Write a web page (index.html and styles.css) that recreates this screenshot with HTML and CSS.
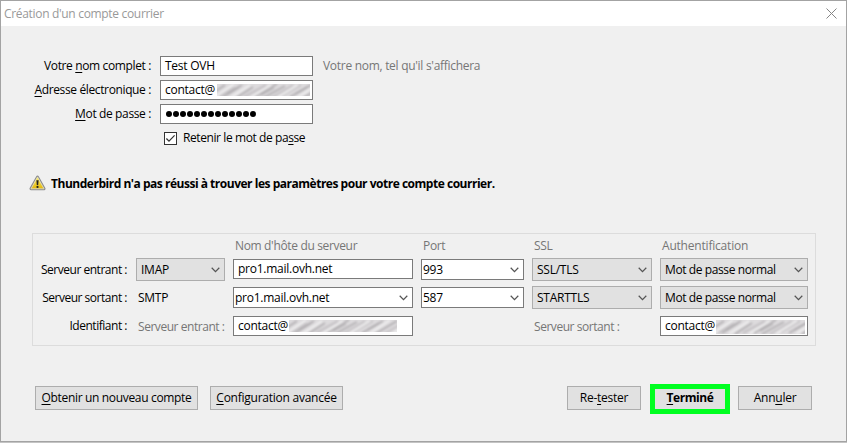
FILE: index.html
```html
<!DOCTYPE html>
<html lang="fr">
<head>
<meta charset="utf-8">
<title>Création d'un compte courrier</title>
<link rel="stylesheet" href="styles.css">
</head>
<body>
<svg class="defs" width="0" height="0">
  <defs>
    <filter id="soft"><feGaussianBlur stdDeviation="0.8"/></filter>
    <pattern id="scribble" width="110" height="14" patternUnits="userSpaceOnUse">
      <rect width="110" height="14" fill="#dddbdd"/>
      <g fill="none" filter="url(#soft)">
        <path d="M-4 9L8 1M6 13L25 1M19 14L36 3M38 13L60 0M46 14L68 2M73 13L94 1M86 14L108 1" stroke="#b0adb0" stroke-width="1.7"/>
        <path d="M2 13L18 3M27 13L49 1M54 14L76 1M65 12L84 1M95 14L112 4" stroke="#c4c1c4" stroke-width="2"/>
        <path d="M-2 13L17 0M13 14L33 1M33 14L54 1M60 14L81 1M80 14L101 0M103 14L114 7" stroke="#f8f8f8" stroke-width="1.4"/>
        <path d="M10 10L22 3M44 11L57 4M78 10L90 3" stroke="#a09da0" stroke-width="1"/>
      </g>
    </pattern>
    <symbol id="chevron" viewBox="0 0 9 6"><path d="M.7 .8L4.5 4.6L8.3 .8" fill="none" stroke="#555" stroke-width="1.25"/></symbol>
  </defs>
</svg>
<div class="dialog">
  <header class="titlebar">
    <span class="title">Création d'un compte courrier</span>
    <svg class="close" width="11" height="11" viewBox="0 0 11 11"><path d="M.5 .5L10.5 10.5M10.5 .5L.5 10.5" stroke="#858585" fill="none"/></svg>
  </header>

  <section class="identity">
    <label>Votre <u>n</u>om complet :</label>
    <div class="input">Test OVH</div>
    <span class="hint">Votre nom, tel qu'il s'affichera</span>
    <label><u>A</u>dresse électronique :</label>
    <div class="input">contact@<svg class="mask mail" width="93" height="12"><rect width="93" height="12" fill="url(#scribble)"/></svg></div>
    <label><u>M</u>ot de passe :</label>
    <div class="input dots"><i></i><i></i><i></i><i></i><i></i><i></i><i></i><i></i><i></i><i></i><i></i><i></i><i></i></div>
  </section>
  <div class="remember">
    <svg width="13" height="13" viewBox="0 0 13 13"><rect x=".5" y=".5" width="12" height="12" fill="#fff" stroke="#333"/><path d="M2.4 6.5L5 9.2L10.6 3.4" fill="none" stroke="#333" stroke-width="1.25"/></svg>
    <span>Retenir le mot de pa<u>s</u>se</span>
  </div>

  <div class="warning">
    <svg width="17" height="16" viewBox="0 0 17 16">
      <defs><linearGradient id="gold" x2="0" y2="1"><stop stop-color="#fff06a"/><stop offset="1" stop-color="#e2b60a"/></linearGradient></defs>
      <path d="M8.5 1.9L15.1 13.8H1.9Z" fill="#ddd" stroke="#8b8b8b" stroke-width="2.8" stroke-linejoin="round"/>
      <path d="M8.5 1.9L15 13.8H2Z" fill="url(#gold)" stroke="#e9e6c8" stroke-width=".8" stroke-linejoin="round"/>
      <path d="M7.4 5.2H9.6L9.2 10H7.8Z" fill="#222"/><circle cx="8.5" cy="11.9" r="1.1" fill="#222"/>
    </svg>
    <strong>Thunderbird n'a pas réussi à trouver les paramètres pour votre compte courrier.</strong>
  </div>

  <section class="servers">
    <span class="head host">Nom d'hôte du serveur</span>
    <span class="head">Port</span>
    <span class="head">SSL</span>
    <span class="head auth-head">Authentification</span>

    <label>Serveur entrant :</label>
    <div class="select">IMAP<svg><use href="#chevron"/></svg></div>
    <div class="input incoming">pro1.mail.ovh.net</div>
    <div class="combo">993<svg><use href="#chevron"/></svg></div>
    <div class="select">SSL/TLS<svg><use href="#chevron"/></svg></div>
    <div class="select method">Mot de passe normal<svg><use href="#chevron"/></svg></div>

    <label>Serveur sortant :</label>
    <span class="plain">SMTP</span>
    <div class="combo">pro1.mail.ovh.net<svg><use href="#chevron"/></svg></div>
    <div class="combo">587<svg><use href="#chevron"/></svg></div>
    <div class="select">STARTTLS<svg><use href="#chevron"/></svg></div>
    <div class="select method">Mot de passe normal<svg><use href="#chevron"/></svg></div>

    <label>Identifiant :</label>
    <span class="plain muted">Serveur entrant :</span>
    <div class="input">contact@<svg class="mask in" width="108" height="12"><rect width="108" height="12" fill="url(#scribble)"/></svg></div>
    <span class="plain muted out">Serveur sortant :</span>
    <div class="input">contact@<svg class="mask auth" width="89" height="14"><rect width="89" height="14" fill="url(#scribble)"/></svg></div>
  </section>

  <footer class="actions">
    <div class="button new"><span><u>O</u>btenir un nouveau compte</span></div>
    <div class="button advanced"><span><u>C</u>onfiguration avancée</span></div>
    <div class="button retest"><span>Re-<u>t</u>ester</span></div>
    <div class="button done"><span><u>T</u>erminé</span></div>
    <div class="button"><span>Ann<u>u</u>ler</span></div>
  </footer>
</div>
</body>
</html>
```

FILE: styles.css
```css
* { box-sizing: border-box; }
body {
  margin: 0;
  width: 847px;
  height: 443px;
  overflow: hidden;
  background: #c4c4c4;
  font: 12px/16px "Open Sans", "Noto Sans", sans-serif;
  letter-spacing: -0.25px;
  color: #000;
}
.defs { position: absolute; }
u { text-decoration-thickness: 1px; text-underline-offset: 2px; text-decoration-skip-ink: none; }
.dialog {
  width: 847px;
  height: 442px;
  border: 1px solid #a3a3a3;
  background: #f0f0f0;
}
.titlebar {
  height: 25px;
  padding: 0 9px 0 3px;
  display: flex;
  align-items: center;
  justify-content: space-between;
  background: #fff;
  color: #999;
  letter-spacing: -0.32px;
}
.identity {
  margin: 30px 0 0 0;
  display: grid;
  grid-template-columns: 150px 153px auto;
  grid-auto-rows: 20px;
  row-gap: 4px;
  column-gap: 9px;
  align-items: center;
}
.identity label { grid-column: 1; text-align: right; letter-spacing: -0.37px; }
.hint, .muted, .head { color: #767676; }
.hint { padding-left: 1px; letter-spacing: -0.29px; }
.input, .combo, .select {
  border: 1px solid #7a7a7a;
  background: #fff;
  display: flex;
  align-items: center;
  white-space: nowrap;
}
.input { height: 20px; padding-left: 4px; position: relative; }
.incoming { margin-top: -1px; }
.mask { position: absolute; top: 3px; }
.mask.mail { left: 56px; }
.mask.in { left: 55px; }
.mask.auth { left: 55px; }
.dots { padding-left: 5px; gap: 1px; }
.dots i { width: 6px; height: 6px; border-radius: 50%; background: #000; }
.remember {
  margin: 6px 0 0 163px;
  height: 16px;
  display: flex;
  align-items: center;
  gap: 6px;
  letter-spacing: -0.41px;
}
.warning {
  margin: 30px 0 0 28px;
  height: 16px;
  display: flex;
  align-items: center;
  gap: 5px;
  letter-spacing: -0.48px;
}
.warning svg { margin-top: -3px; }
.servers {
  width: 784px;
  height: 113px;
  margin: 41px 0 0 31px;
  border: 1px solid #dcdcdc;
  display: grid;
  grid-template-columns: 95px 89px 180px 103px 120px 148px;
  grid-template-rows: 19px 23px 23px 24px;
  row-gap: 5px;
  column-gap: 8px;
  align-items: center;
}
.servers label { text-align: right; padding-right: 1px; white-space: nowrap; letter-spacing: -0.48px; }
.head { padding: 5px 0 0 2px; white-space: nowrap; letter-spacing: -0.34px; }
.head.host { grid-column: 3; }
.head.auth-head { letter-spacing: -0.2px; }
.plain { padding-left: 2px; white-space: nowrap; }
.muted { letter-spacing: -0.45px; padding-top: 2px; }
.out { grid-column: 5; }
.combo { height: 21px; padding: 0 4px 0 1px; }
.select { height: 23px; padding: 0 4px; background: #e1e1e1; border-color: #adadad; }
.method { letter-spacing: -0.4px; }
.combo svg, .select svg { width: 9px; height: 6px; margin-left: auto; }
.actions {
  margin: 37px 34px 0 34px;
  height: 30px;
  display: flex;
  align-items: center;
}
.button {
  width: 74px;
  height: 24px;
  border: 1px solid #adadad;
  background: #e1e1e1;
  display: flex;
  align-items: center;
  justify-content: center;
  white-space: nowrap;
}
.new { width: 163px; margin-right: 12px; letter-spacing: -0.33px; }
.advanced { width: 133px; }
.retest { margin-left: auto; margin-right: 9px; }
.done {
  width: 80px;
  height: 30px;
  margin: 2px 8px 0 0;
  padding-bottom: 2px;
  border: 5px solid #00ff21;
  font-weight: bold;
  letter-spacing: -0.45px;
}
```
